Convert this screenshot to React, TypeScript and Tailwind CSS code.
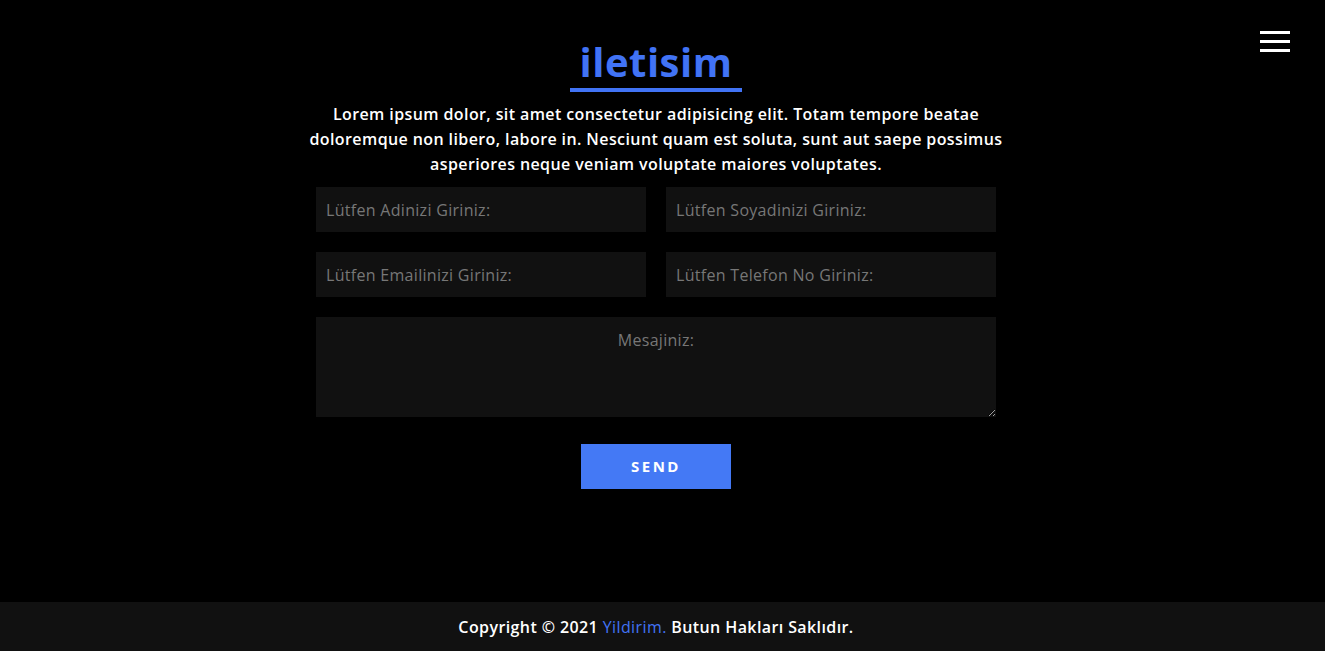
import React from "react";

const fields = [
  "Lütfen Adinizi Giriniz:",
  "Lütfen Soyadinizi Giriniz:",
  "Lütfen Emailinizi Giriniz:",
  "Lütfen Telefon No Giriniz:",
];

const App: React.FC = () => {
  return (
    <div className="min-h-screen bg-black flex flex-col font-['Open_Sans',sans-serif]">
      {/* menu toggle */}
      <button className="absolute top-[31px] right-[35px] flex flex-col gap-[6px]">
        <span className="block w-[30px] h-[3px] bg-white" />
        <span className="block w-[30px] h-[3px] bg-white" />
        <span className="block w-[30px] h-[3px] bg-white" />
      </button>

      <main className="flex-1 flex flex-col items-center pt-[36px] pr-[13px]">
        <h2 className="inline-block px-[10px] border-b-4 border-[#4173f5] text-[40px] leading-[52px] font-bold tracking-[0.5px] text-[#4173f5]">
          iletisim
        </h2>
        <p className="w-[700px] mt-[10px] text-center text-white font-semibold text-[16px] leading-[25px] tracking-[0.4px]">
          Lorem ipsum dolor, sit amet consectetur adipisicing elit. Totam tempore beatae doloremque
          non libero, labore in. Nesciunt quam est soluta, sunt aut saepe possimus asperiores neque
          veniam voluptate maiores voluptates.
        </p>

        <form className="w-[680px] mt-[10px] grid grid-cols-2 gap-[20px]">
          {fields.map((f) => (
            <input
              key={f}
              type="text"
              placeholder={f}
              className="h-[45px] bg-[#111111] px-[10px] text-[16px] tracking-[0.3px] text-white placeholder:text-[#777777] outline-none"
            />
          ))}
          <textarea
            placeholder="Mesajiniz:"
            className="col-span-2 h-[100px] bg-[#111111] px-[10px] pt-[11px] text-center text-[16px] tracking-[0.3px] text-white placeholder:text-[#777777] outline-none"
          />
          <div className="col-span-2 flex justify-center mt-[7px]">
            <button
              type="button"
              className="w-[150px] h-[45px] bg-[#4479f5] text-white text-[15px] font-bold tracking-[2.5px]"
            >
              SEND
            </button>
          </div>
        </form>
      </main>

      <footer className="h-[49px] bg-[#111111] flex items-center justify-center pr-[13px] text-white font-semibold text-[16px] tracking-[0.4px]">
        Copyright © 2021&nbsp;<span className="text-[#4173f5] font-normal">Yildirim.</span>&nbsp;Butun Hakları Saklıdır.
      </footer>
    </div>
  );
};

export default App;
